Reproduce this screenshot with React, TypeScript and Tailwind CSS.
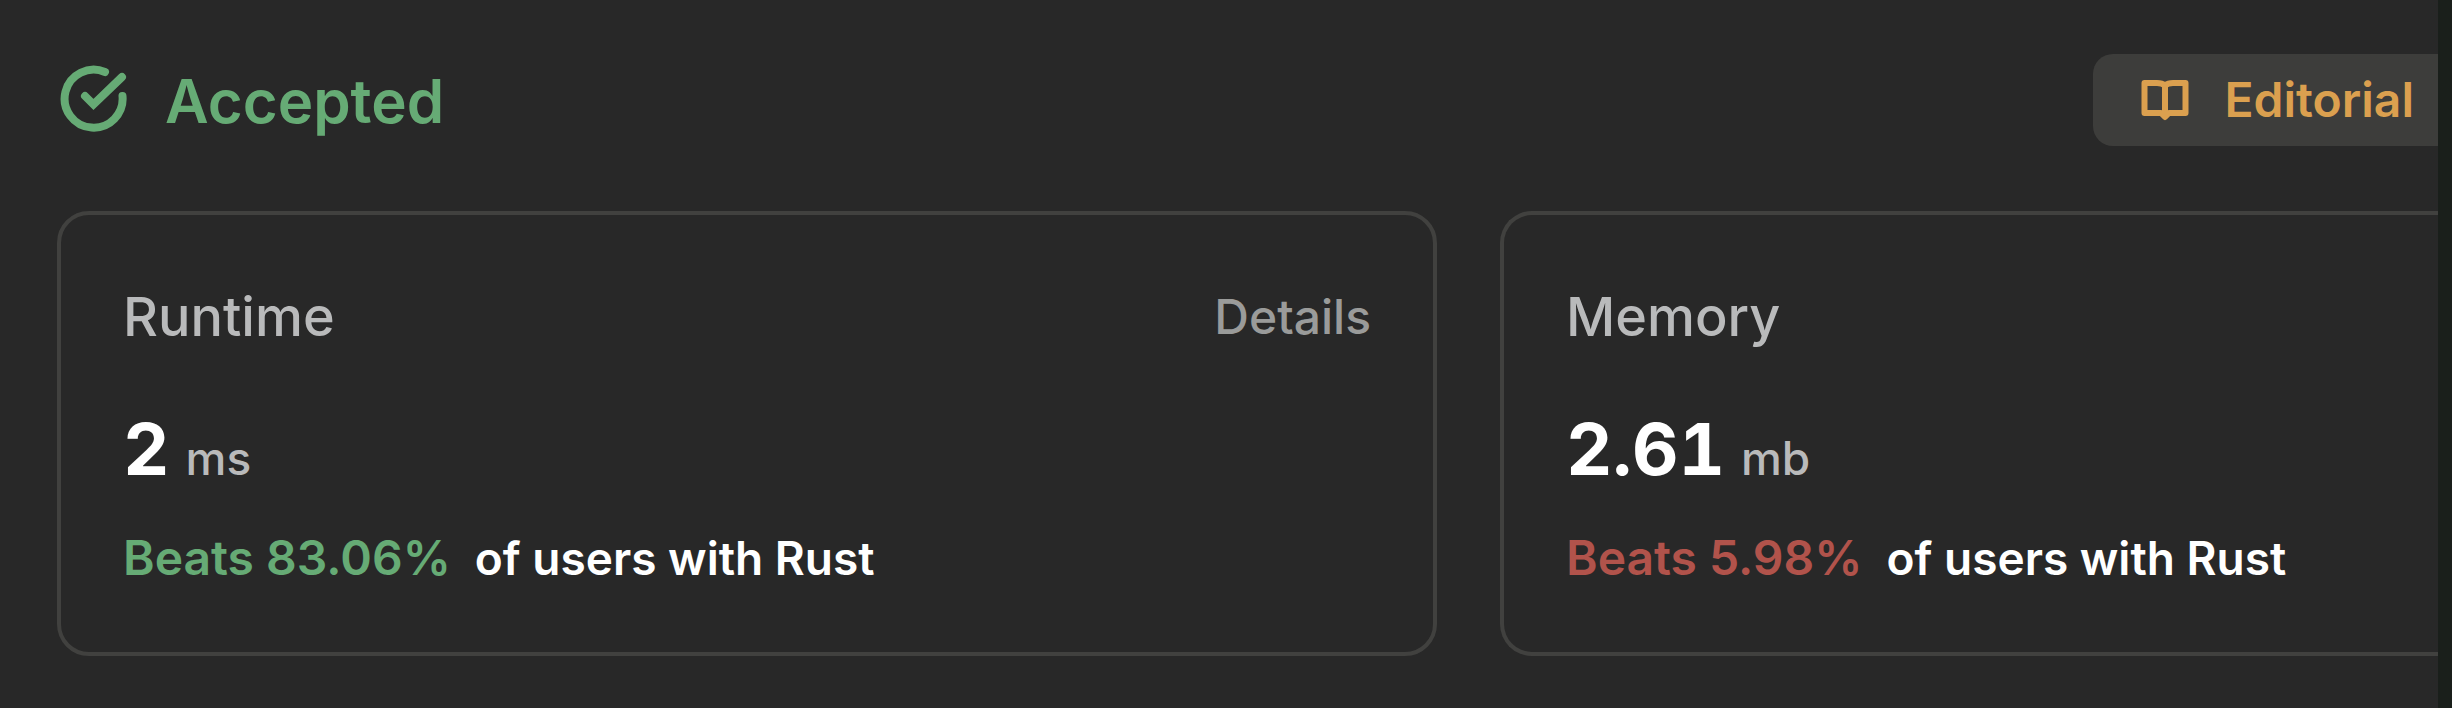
type StatCardProps = {
    title: string
    value: string
    unit: string
    beats: string
    beatsClass: string
    className: string
    details?: boolean
}

export default function App() {
    return (
        <main className="flex min-h-screen overflow-hidden bg-[#1a1f1b] font-['Inter',sans-serif]">
            <div className="min-w-0 flex-1 bg-[#282828] pl-[57px] pt-[54px]">
                <header className="flex items-start justify-between">
                    <div className="flex items-center gap-9 text-[#66ab75]">
                        <AcceptedIcon />
                        <h1 className="text-[60px] font-semibold leading-[94px]">Accepted</h1>
                    </div>
                    <button className="flex h-[92px] items-center gap-9 rounded-l-[20px] bg-[#3d3d3b] pl-12 pr-6 text-[#dba04f]">
                        <BookIcon />
                        <span className="text-[48px] font-semibold leading-[60px]">Editorial</span>
                    </button>
                </header>

                <section className="mt-[63px] grid grid-cols-[1380fr_938fr] gap-[63px] pb-[52px]">
                    <StatCard
                        title="Runtime"
                        value="2"
                        unit="ms"
                        beats="83.06%"
                        beatsClass="text-[#66ab75]"
                        className="rounded-[32px] border-4"
                        details
                    />
                    {/* runs off the right edge of the panel */}
                    <StatCard
                        title="Memory"
                        value="2.61"
                        unit="mb"
                        beats="5.98%"
                        beatsClass="text-[#b1534b]"
                        className="rounded-l-[32px] border-4 border-r-0"
                    />
                </section>
            </div>
            <div className="w-[14px] shrink-0" />
        </main>
    )
}

function StatCard({ title, value, unit, beats, beatsClass, className, details }: StatCardProps) {
    return (
        <article className={`border-[#41413f] px-[62px] pb-16 pt-[60px] ${className}`}>
            <div className="flex items-center justify-between">
                <h2 className="text-[54px] font-medium leading-[84px] text-[#b9babb]">{title}</h2>
                {details && (
                    <a href="#details" className="text-[48px] font-medium leading-[80px] text-[#9a9b9a]">
                        Details
                    </a>
                )}
            </div>
            <p className="mt-9 flex items-baseline gap-4 leading-[108px]">
                <span className="text-[72px] font-bold tabular-nums text-white">{value}</span>
                <span className="text-[46px] font-medium text-[#b9babb]">{unit}</span>
            </p>
            <p className="mt-4 flex items-baseline gap-6 font-semibold leading-[60px]">
                <span className={`text-[48px] ${beatsClass}`}>Beats {beats}</span>
                <span className="text-[46px] text-white">of users with Rust</span>
            </p>
        </article>
    )
}

function AcceptedIcon() {
    return (
        <svg className="size-[72px]" viewBox="0 0 72 72" fill="none" stroke="currentColor" strokeWidth="8" strokeLinejoin="miter" strokeLinecap="round" aria-hidden="true">
            <path d="M48 7A29 29 0 1 0 65.500 31" />
            <path d="M28 31L36.500 39.500L65 12" />
        </svg>
    )
}

function BookIcon() {
    return (
        <svg className="h-[41px] w-[48px]" viewBox="0 0 48 41" fill="none" stroke="currentColor" strokeWidth="6" strokeLinejoin="round" aria-hidden="true">
            <path d="M24 5.500Q21 3 16 3H3.500V33H20L24 37L28 33H44.500V3H32Q27 3 24 5.500V35" />
        </svg>
    )
}
